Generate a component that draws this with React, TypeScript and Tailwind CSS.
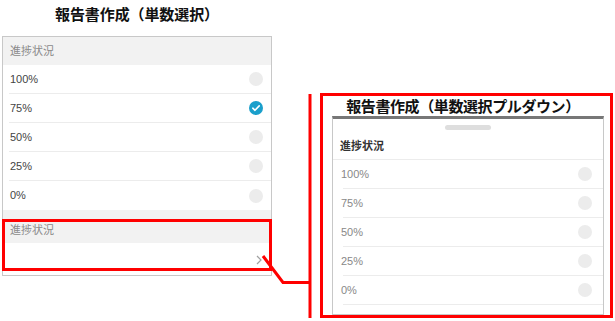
import React from "react";

const FONT = { fontFamily: '"Liberation Sans", "Noto Sans CJK JP", sans-serif' };

function Circle({ checked }: { checked?: boolean }) {
  if (checked) {
    return (
      <svg width="14" height="14" viewBox="0 0 14 14">
        <circle cx="7" cy="7" r="7" fill="#1a9fcb" />
        <path d="M3.8 7.2 L6 9.3 L10.2 4.9" fill="none" stroke="#fff" strokeWidth="1.6" strokeLinecap="round" strokeLinejoin="round" />
      </svg>
    );
  }
  return <div className="w-[14px] h-[14px] rounded-full bg-[#ececec]" />;
}

const opts = ["100%", "75%", "50%", "25%", "0%"];

export default function App() {
  return (
    <div className="relative w-[615px] h-[321px] bg-white overflow-hidden" style={FONT}>
      <div className="flex items-start">
        {/* Left column */}
        <div className="w-[272px] pl-[2px] shrink-0">
          <div className="h-[36px] flex items-center justify-center pb-[6px] text-[15px] font-bold text-[#111] tracking-[-0.1px]">
            報告書作成（単数選択）
          </div>
          <div className="w-[270px] border border-[#c8c8c8] bg-white">
            <div className="h-[28px] bg-[#f2f2f2] flex items-center pl-[7px] text-[11px] text-[#8a8a8a]">進捗状況</div>
            {opts.map((o, i) => (
              <div key={o} className="pl-[6px]">
                <div className={`h-[29px] flex items-center justify-between pr-[8px] pl-[1px] ${i < 4 ? "border-b border-[#ececec]" : ""}`}>
                  <span className="text-[11px] text-[#444]">{o}</span>
                  <Circle checked={o === "75%"} />
                </div>
              </div>
            ))}
            <div className="bg-[#f2f2f2] h-[33px] flex items-end pb-[5px] pl-[7px] text-[11px] text-[#8a8a8a]">進捗状況</div>
            <div className="h-[32px] flex items-center justify-end pr-[9px] pt-[1px]">
              <svg width="6" height="10" viewBox="0 0 6 10">
                <path d="M1 1 L5 5 L1 9" fill="none" stroke="#a0a0a0" strokeWidth="1.2" />
              </svg>
            </div>
          </div>
        </div>

        {/* Right box */}
        <div className="ml-[48px] mt-[93px] w-[293px] h-[225px] border-[3px] border-[#ff0000] pl-[9px] pr-[6px] flex flex-col">
          <div className="h-[20px] flex items-center justify-center pr-[10px] text-[15px] font-bold text-[#111] leading-none tracking-[-0.4px]">
            報告書作成（単数選択プルダウン）
          </div>
          <div className="flex-1 border border-[#c8c8c8] border-t-[3px] border-t-[#777] bg-white flex flex-col">
            <div className="h-[14px] flex items-center justify-center pt-[3px]">
              <div className="w-[46px] h-[5px] rounded-full bg-[#dedede]" />
            </div>
            <div className="h-[27px] flex items-center pl-[7px] text-[11px] font-semibold text-[#333] border-b border-[#ececec]">進捗状況</div>
            {opts.map((o) => (
              <div key={o} className="pl-[10px]">
                <div className="h-[29px] flex items-center justify-between pr-[11px] border-b border-[#ececec]">
                  <span className="text-[11px] text-[#888] -ml-[2px]">{o}</span>
                  <Circle />
                </div>
              </div>
            ))}
          </div>
        </div>
      </div>

      {/* Annotation overlays */}
      <div className="absolute left-[2px] top-[219px] w-[270px] h-[52px] border-[3px] border-[#ff0000]" />
      <svg className="absolute left-0 top-0" width="615" height="321">
        <path d="M263 256 L283 282.5 L310 282.5" fill="none" stroke="#ff0000" strokeWidth="3" />
        <line x1="310" y1="94" x2="310" y2="318" stroke="#ff0000" strokeWidth="3" />
      </svg>
    </div>
  );
}
